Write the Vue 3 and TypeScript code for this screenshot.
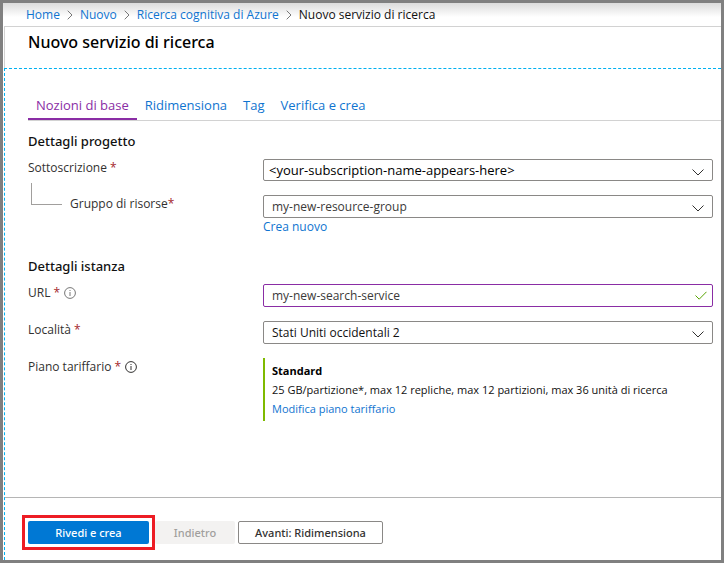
<script setup lang="ts">
import { ref } from 'vue'

interface Crumb {
  label: string
  current?: boolean
}

const crumbs: Crumb[] = [
  { label: 'Home' },
  { label: 'Nuovo' },
  { label: 'Ricerca cognitiva di Azure' },
  { label: 'Nuovo servizio di ricerca', current: true },
]

const tabs: string[] = ['Nozioni di base', 'Ridimensiona', 'Tag', 'Verifica e crea']
const activeTab = ref<string>(tabs[0])

const subscription = ref('<your-subscription-name-appears-here>')
const resourceGroup = ref('my-new-resource-group')
const serviceUrl = ref('my-new-search-service')
const location = ref('Stati Uniti occidentali 2')
</script>

<template>
  <div class="frame">
    <nav class="breadcrumb" aria-label="Breadcrumb">
      <template v-for="crumb in crumbs" :key="crumb.label">
        <span v-if="crumb.current" class="current">{{ crumb.label }}</span>
        <template v-else>
          <a href="#">{{ crumb.label }}</a>
          <svg class="separator" viewBox="0 0 6 10" width="6" height="10" aria-hidden="true">
            <path d="M0.7 0.7 5 5 0.7 9.3" />
          </svg>
        </template>
      </template>
    </nav>

    <main class="blade">
      <header class="title-bar">
        <h1>Nuovo servizio di ricerca</h1>
      </header>

      <div class="content">
        <nav class="tabs">
          <a
            v-for="tab in tabs"
            :key="tab"
            href="#"
            :class="{ active: tab === activeTab }"
            @click.prevent="activeTab = tab"
          >{{ tab }}</a>
        </nav>

        <form id="service-form" class="form" @submit.prevent>
          <h2>Dettagli progetto</h2>
          <div class="row">
            <label for="subscription">Sottoscrizione <span class="required">*</span></label>
            <div class="field">
              <select id="subscription" v-model="subscription" class="strong">
                <option>&lt;your-subscription-name-appears-here&gt;</option>
              </select>
              <svg class="chevron" viewBox="0 0 12 7" width="12" height="7" aria-hidden="true">
                <path d="M0.5 0.5 6 6 11.5 0.5" />
              </svg>
            </div>
          </div>
          <div class="row group-row">
            <div class="nested">
              <span class="elbow"></span>
              <label for="group">Gruppo di risorse<span class="required">*</span></label>
            </div>
            <div>
              <div class="field">
                <select id="group" v-model="resourceGroup">
                  <option>my-new-resource-group</option>
                </select>
                <svg class="chevron" viewBox="0 0 12 7" width="12" height="7" aria-hidden="true">
                  <path d="M0.5 0.5 6 6 11.5 0.5" />
                </svg>
              </div>
              <a class="create" href="#">Crea nuovo</a>
            </div>
          </div>

          <h2>Dettagli istanza</h2>
          <div class="row">
            <div class="caption">
              <label for="url">URL <span class="required">*</span></label>
              <svg class="info soft" viewBox="0 0 12 12" width="12" height="12" aria-hidden="true">
                <circle cx="6" cy="6" r="5.4" />
                <path d="M6 5v4M6 3v1" />
              </svg>
            </div>
            <div class="field">
              <input id="url" v-model="serviceUrl" type="text" />
              <svg class="check" viewBox="0 0 12 9" width="12" height="9" aria-hidden="true">
                <path d="M0.5 4.5 4.2 8.2 11.5 0.8" />
              </svg>
            </div>
          </div>
          <div class="row">
            <label for="location">Località <span class="required">*</span></label>
            <div class="field">
              <select id="location" v-model="location" class="dark">
                <option>Stati Uniti occidentali 2</option>
              </select>
              <svg class="chevron" viewBox="0 0 12 7" width="12" height="7" aria-hidden="true">
                <path d="M0.5 0.5 6 6 11.5 0.5" />
              </svg>
            </div>
          </div>
          <div class="row">
            <div class="caption">
              <span>Piano tariffario <span class="required">*</span></span>
              <svg class="info" viewBox="0 0 12 12" width="12" height="12" aria-hidden="true">
                <circle cx="6" cy="6" r="5.4" />
                <path d="M6 5v4M6 3v1" />
              </svg>
            </div>
            <div class="plan">
              <strong>Standard</strong>
              <span>25 GB/partizione*, max 12 repliche, max 12 partizioni, max 36 unità di ricerca</span>
              <a href="#">Modifica piano tariffario</a>
            </div>
          </div>
        </form>

        <footer class="actions">
          <div class="highlight">
            <button class="primary" type="submit" form="service-form">Rivedi e crea</button>
          </div>
          <button class="back" type="button" disabled>Indietro</button>
          <button class="next" type="button">Avanti: Ridimensiona</button>
        </footer>
      </div>
    </main>
  </div>
</template>

<style>
body {
  margin: 0;
}
</style>

<style scoped>
* {
  box-sizing: border-box;
}

.frame {
  display: flex;
  flex-direction: column;
  min-height: 100vh;
  border: 3px solid #808080;
  background: #fff;
  color: #323130;
  font-family: 'Open Sans', 'Noto Sans', sans-serif;
  font-size: 12px;
  line-height: 18px;
}

a {
  color: #0f74d0;
  text-decoration: none;
}

.breadcrumb {
  display: flex;
  align-items: center;
  gap: 7px;
  height: 23px;
  padding-left: 23px;
  background: linear-gradient(#dcdcdc, #fff 14px);
}

.current {
  color: #111;
}

.separator {
  fill: none;
  stroke: #777;
}

.blade {
  display: flex;
  flex: 1;
  flex-direction: column;
  margin-left: 1px;
  border-top: 1px solid #d2d2d2;
}

.title-bar {
  height: 41px;
  padding: 3px 23px;
  border-left: 1px solid #d2d2d2;
}

h1,
h2 {
  font-family: 'Noto Sans', 'Open Sans', sans-serif;
  font-weight: 500;
}

h1 {
  margin: 0;
  color: #000;
  font-size: 16px;
  line-height: 24px;
}

.content {
  display: flex;
  flex: 1;
  flex-direction: column;
  border-top: 1px dashed #00b0f0;
  border-left: 1px dashed #00b0f0;
}

.tabs {
  display: flex;
  margin: 23px 0 0 23px;
  border-bottom: 1px solid #d2d2d2;
  font-size: 13px;
}

.tabs a {
  height: 28px;
  padding: 4px 8px;
}

.tabs .active {
  border-bottom: 2px solid #8a2da5;
  color: #8a2da5;
}

.form {
  flex: 1;
  padding: 10px 8px 24px 23px;
}

h2 {
  margin: 0 0 8px;
  color: #111;
  font-size: 13px;
  line-height: 20px;
}

.row {
  display: grid;
  grid-template-columns: 235px 1fr;
  align-items: start;
  margin-bottom: 14px;
}

.group-row {
  margin-bottom: 20px;
}

.required {
  color: #a4262c;
}

.caption {
  display: flex;
  align-items: center;
  gap: 4px;
}

.nested {
  display: flex;
  gap: 8px;
  padding-left: 3px;
}

.elbow {
  width: 31px;
  height: 22px;
  margin-top: -12px;
  border-bottom: 1px solid #a19f9d;
  border-left: 1px solid #a19f9d;
}

.info {
  fill: none;
  stroke: #323130;
}

.soft {
  stroke: #777;
}

.field {
  display: grid;
  align-items: center;
}

.field > * {
  grid-area: 1 / 1;
}

select,
input {
  width: 100%;
  height: 23px;
  margin: 0;
  padding: 0 32px 0 8px;
  border: 1px solid #8a8886;
  border-radius: 2px;
  background: #fff;
  color: #3b3a39;
  font: inherit;
  appearance: none;
}

input {
  border-color: #8a2da5;
}

.strong {
  height: 22px;
  padding-left: 5px;
  color: #000;
  font-size: 13px;
}

.dark {
  color: #111;
}

.chevron,
.check {
  justify-self: end;
  margin-right: 9px;
  fill: none;
  pointer-events: none;
}

.chevron {
  margin-top: 4px;
  stroke: #323130;
}

.check {
  margin-right: 6px;
  stroke: #57a300;
}

.create {
  display: block;
}

.plan {
  display: flex;
  flex-direction: column;
  padding: 3px 0 3px 7px;
  border-left: 2px solid #7fba00;
  color: #111;
  font-size: 11px;
  line-height: 19px;
}

.plan strong {
  color: #000;
}

.actions {
  display: flex;
  align-items: center;
  gap: 3px;
  height: 63px;
  padding: 6px 17px 0;
  border-top: 1px solid #b5b5b5;
}

.highlight {
  display: flex;
  padding: 3px;
  border: 3px solid #ed1c24;
}

button {
  height: 23px;
  padding: 0;
  border: 1px solid transparent;
  border-radius: 2px;
  font-family: 'Noto Sans', 'Open Sans', sans-serif;
  font-size: 11px;
  font-weight: 500;
}

.primary {
  width: 121px;
  background: #0078d4;
  color: #fff;
}

.back {
  width: 80px;
  margin-left: -3px;
  background: #f3f2f1;
  color: #a19f9d;
}

.next {
  width: 145px;
  border-color: #8a8886;
  background: #fff;
  color: #323130;
}
</style>
